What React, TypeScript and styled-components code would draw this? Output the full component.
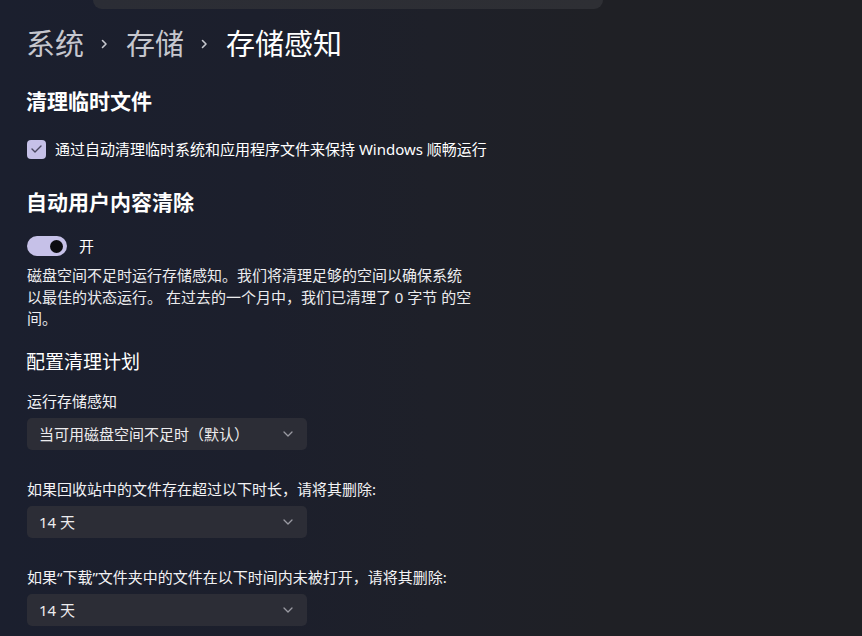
import React from "react";
import styled, { createGlobalStyle } from "styled-components";

const Global = createGlobalStyle`
  html, body { margin: 0; padding: 0; }
  body {
    width: 862px;
    height: 636px;
    overflow: hidden;
    background: linear-gradient(90deg, #1b1f2e 0%, #1c1f2c 30%, #1e2029 50%, #1f2025 70%, #1f2024 100%);
    font-family: "Noto Sans", "Noto Sans CJK SC", sans-serif;
    color: #ffffff;
  }
`;

const Page = styled.div`
  display: flex;
  flex-direction: column;
  height: 636px;
`;

const SearchEdge = styled.div`
  margin-left: 93px;
  width: 510px;
  height: 9px;
  border-radius: 0 0 9px 9px;
  background: linear-gradient(90deg, #2b2d35, #2e2f34);
`;

const Content = styled.div`
  display: flex;
  flex-direction: column;
  align-items: flex-start;
  padding-left: 26px;
`;

const Breadcrumb = styled.div`
  display: flex;
  align-items: center;
  margin-top: 15px;
  height: 40px;
  font-size: 29px;
  line-height: 40px;
`;

const Crumb = styled.span<{ $current?: boolean }>`
  color: ${(p) => (p.$current ? "#ffffff" : "#c6c7ce")};
`;

const CrumbSep = styled.span`
  display: flex;
  align-items: center;
  margin: 0 18px 0 17px;
  color: #c6c7ce;
`;

const Heading = styled.div<{ $top: number }>`
  margin-top: ${(p) => p.$top}px;
  font-size: 21px;
  line-height: 28px;
  font-weight: 600;
`;

const SubHeading = styled.div<{ $top: number }>`
  margin-top: ${(p) => p.$top}px;
  font-size: 19px;
  line-height: 26px;
  font-weight: 400;
`;

const Row = styled.div<{ $top: number }>`
  display: flex;
  align-items: center;
  margin-top: ${(p) => p.$top}px;
  height: 20px;
  font-size: 15px;
  line-height: 20px;
`;

const Box = styled.span`
  display: flex;
  align-items: center;
  justify-content: center;
  width: 19px;
  height: 19px;
  margin-left: 1px;
  border-radius: 4px;
  background: #c6c1e8;
  margin-right: 9px;
`;

const Toggle = styled.span`
  display: flex;
  align-items: center;
  justify-content: flex-end;
  box-sizing: border-box;
  width: 40px;
  height: 20px;
  margin-left: 1px;
  padding-right: 4px;
  border-radius: 10px;
  background: #c6c1e8;
  margin-right: 12px;
`;

const Knob = styled.span`
  width: 13px;
  height: 13px;
  border-radius: 50%;
  background: #0c0c10;
`;

const Para = styled.p`
  margin: 9px 0 0 1px;
  width: 448px;
  font-size: 15px;
  line-height: 21.5px;
  color: #ececee;
`;

const Label = styled.div<{ $top: number }>`
  margin-top: ${(p) => p.$top}px;
  margin-left: 1px;
  font-size: 15px;
  line-height: 20px;
  color: #f2f2f4;
`;

const Select = styled.div`
  display: flex;
  align-items: center;
  justify-content: space-between;
  box-sizing: border-box;
  margin-top: 7px;
  margin-left: 1px;
  width: 280px;
  height: 32px;
  padding: 0 14px 0 12px;
  border-radius: 5px;
  background: #2c2d36;
  font-size: 15px;
  color: #ececee;
`;

const Chevron = () => (
  <svg width="10" height="6" viewBox="0 0 10 6" fill="none">
    <path d="M1 1l4 4 4-4" stroke="#9a9aa2" strokeWidth="1.3" strokeLinecap="round" strokeLinejoin="round" />
  </svg>
);

const CrumbChevron = () => (
  <svg width="7" height="10" viewBox="0 0 7 10" fill="none">
    <path d="M1.5 1.5l3.5 3.5-3.5 3.5" stroke="#c6c7ce" strokeWidth="1.6" strokeLinecap="round" strokeLinejoin="round" />
  </svg>
);

export default function App() {
  return (
    <Page>
      <Global />
      <SearchEdge />
      <Content>
        <Breadcrumb>
          <Crumb>系统</Crumb>
          <CrumbSep><CrumbChevron /></CrumbSep>
          <Crumb>存储</Crumb>
          <CrumbSep><CrumbChevron /></CrumbSep>
          <Crumb $current>存储感知</Crumb>
        </Breadcrumb>

        <Heading $top={23}>清理临时文件</Heading>
        <Row $top={24}>
          <Box>
            <svg width="11" height="8" viewBox="0 0 11 8" fill="none">
              <path d="M1 4l3 3 6-6" stroke="#4a4860" strokeWidth="1.4" strokeLinecap="round" strokeLinejoin="round" />
            </svg>
          </Box>
          通过自动清理临时系统和应用程序文件来保持 Windows 顺畅运行
        </Row>

        <Heading $top={29}>自动用户内容清除</Heading>
        <Row $top={20}>
          <Toggle><Knob /></Toggle>
          开
        </Row>
        <Para>
          磁盘空间不足时运行存储感知。我们将清理足够的空间以确保系统以最佳的状态运行。 在过去的一个月中，我们已清理了 0 字节 的空间。
        </Para>

        <SubHeading $top={19}>配置清理计划</SubHeading>
        <Label $top={16}>运行存储感知</Label>
        <Select>
          当可用磁盘空间不足时（默认）
          <Chevron />
        </Select>

        <Label $top={29}>如果回收站中的文件存在超过以下时长，请将其删除:</Label>
        <Select>
          14 天
          <Chevron />
        </Select>

        <Label $top={29}>如果“下载”文件夹中的文件在以下时间内未被打开，请将其删除:</Label>
        <Select>
          14 天
          <Chevron />
        </Select>
      </Content>
    </Page>
  );
}
